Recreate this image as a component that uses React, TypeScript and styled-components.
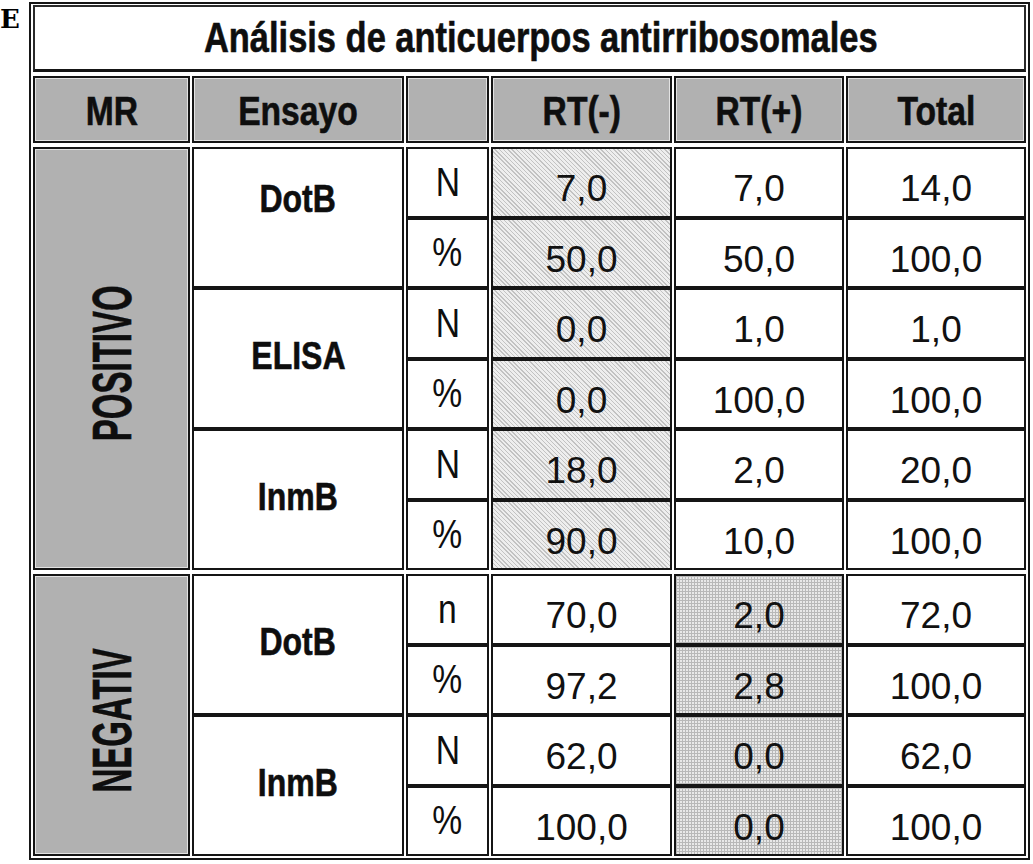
import React from "react";
import styled, { createGlobalStyle, css } from "styled-components";

const Global = createGlobalStyle`
  html, body { margin: 0; padding: 0; background: #ffffff; }
  body { font-family: "Liberation Sans", Arial, sans-serif; color: #111; }
`;

const Page = styled.div`
  display: flex;
  align-items: flex-start;
  padding-top: 2px;
  width: 1033px;
  height: 862px;
`;

const Letter = styled.div`
  width: 29px;
  padding-top: 4px;
  font-family: "DejaVu Serif", "Liberation Serif", serif;
  font-weight: 700;
  font-size: 26px;
  line-height: 1;
  color: #000;
`;

const Frame = styled.div`
  display: grid;
  grid-template-columns: 157px 212px 83px 181px 170px 180px;
  grid-template-rows: 67px 4px 67px 4px repeat(6, 70.5px) 4px repeat(4, 70.5px);
  column-gap: 2px;
  border: 2px solid #161616;
  padding: 1px 2px 2px 2px;
  background: #ffffff;
`;

type Place = { $row: number; $col: number; $rowSpan?: number; $colSpan?: number };

const placed = css<Place>`
  grid-row: ${(p) => p.$row} / span ${(p) => p.$rowSpan ?? 1};
  grid-column: ${(p) => p.$col} / span ${(p) => p.$colSpan ?? 1};
`;

const CellBase = styled.div<Place>`
  ${placed};
  box-sizing: border-box;
  border: 2px solid #151515;
  display: flex;
  align-items: center;
  justify-content: center;
  min-width: 0;
  min-height: 0;
  overflow: hidden;
  font-family: "Liberation Sans", Arial, sans-serif;
  color: #0e0e0e;
`;

/* condensed text: the reference uses a narrow grotesque */
const Narrow = styled.span`
  display: inline-block;
  white-space: nowrap;
  transform: scaleX(0.82);
  line-height: 1;
`;

const heavy = css`
  font-weight: 700;
  -webkit-text-stroke: 0.6px #0e0e0e;
`;

const TitleCell = styled(CellBase)`
  ${heavy};
  border-width: 2px 2px 3px 2px;
  border-color: #2a2a2a #2a2a2a #151515 #2a2a2a;
  padding-left: 22px;
  font-size: 42px;
`;

const HeadCell = styled(CellBase)`
  ${heavy};
  background: #b1b1b1;
  box-shadow: inset 0 0 0 1px #e2e2e2;
  font-size: 41px;
  padding-top: 3px;
`;

const GroupCell = styled(CellBase)`
  background: #b1b1b1;
  box-shadow: inset 0 0 0 1px #e2e2e2;
  padding-top: 10px;
`;

const Vertical = styled.span`
  ${heavy};
  writing-mode: vertical-rl;
  transform: rotate(180deg) scaleY(0.59);
  white-space: nowrap;
  font-size: 56px;
  line-height: 1;
`;

const LabelCell = styled(CellBase)<{ $lift: number }>`
  ${heavy};
  background: #ffffff;
  font-size: 39px;
  padding-bottom: ${(p) => 7 + p.$lift * 2}px;
`;

const UnitCell = styled(CellBase)`
  background: #ffffff;
  font-weight: 400;
  font-size: 41px;
`;

type Shade = "none" | "hatch" | "grid";

const ValueCell = styled(CellBase)<{ $shade: Shade }>`
  background-color: #ffffff;
  font-weight: 400;
  font-size: 37px;
  color: #111;
  padding-top: 14px;
  ${(p) =>
    p.$shade === "hatch" &&
    css`
      background-color: #e4e4e4;
      background-image: repeating-linear-gradient(
        45deg,
        #c2c2c2 0px,
        #c2c2c2 1px,
        #eeeeee 1px,
        #eeeeee 3px
      );
    `}
  ${(p) =>
    p.$shade === "grid" &&
    css`
      background-color: #e8e8e8;
      background-image: linear-gradient(#b8b8b8 1px, transparent 1px),
        linear-gradient(90deg, #b8b8b8 1px, transparent 1px);
      background-size: 3px 3px;
    `}
`;

type Group = { name: string; lift?: number; rows: string[][] };
type Section = { label: string; shadeCol: number; groups: Group[] };

const sections: Section[] = [
  {
    label: "POSITIVO",
    shadeCol: 0,
    groups: [
      { name: "DotB", lift: 16, rows: [["N", "7,0", "7,0", "14,0"], ["%", "50,0", "50,0", "100,0"]] },
      { name: "ELISA", rows: [["N", "0,0", "1,0", "1,0"], ["%", "0,0", "100,0", "100,0"]] },
      { name: "InmB", rows: [["N", "18,0", "2,0", "20,0"], ["%", "90,0", "10,0", "100,0"]] },
    ],
  },
  {
    label: "NEGATIV",
    shadeCol: 1,
    groups: [
      { name: "DotB", rows: [["n", "70,0", "2,0", "72,0"], ["%", "97,2", "2,8", "100,0"]] },
      { name: "InmB", rows: [["N", "62,0", "0,0", "62,0"], ["%", "100,0", "0,0", "100,0"]] },
    ],
  },
];

const headers = ["MR", "Ensayo", "", "RT(-)", "RT(+)", "Total"];

export default function App() {
  const cells: React.ReactNode[] = [];
  let row = 5;
  sections.forEach((sec, si) => {
    const span = sec.groups.length * 2;
    cells.push(
      <GroupCell key={`s${si}`} $row={row} $col={1} $rowSpan={span}>
        <Vertical>{sec.label}</Vertical>
      </GroupCell>
    );
    sec.groups.forEach((g, gi) => {
      const gRow = row + gi * 2;
      cells.push(
        <LabelCell key={`g${si}-${gi}`} $row={gRow} $col={2} $rowSpan={2} $lift={g.lift ?? 0}>
          <Narrow>{g.name}</Narrow>
        </LabelCell>
      );
      g.rows.forEach((r, ri) => {
        const rr = gRow + ri;
        cells.push(
          <UnitCell key={`u${si}-${gi}-${ri}`} $row={rr} $col={3}>
            <Narrow>{r[0]}</Narrow>
          </UnitCell>
        );
        r.slice(1).forEach((v, vi) => {
          const shade: Shade =
            vi === sec.shadeCol ? (sec.shadeCol === 0 ? "hatch" : "grid") : "none";
          cells.push(
            <ValueCell key={`v${si}-${gi}-${ri}-${vi}`} $row={rr} $col={4 + vi} $shade={shade}>
              {v}
            </ValueCell>
          );
        });
      });
    });
    row += span + 1;
  });

  return (
    <>
      <Global />
      <Page>
        <Letter>E</Letter>
        <Frame>
          <TitleCell $row={1} $col={1} $colSpan={6}>
            <Narrow>Análisis de anticuerpos antirribosomales</Narrow>
          </TitleCell>
          {headers.map((h, i) => (
            <HeadCell key={`h${i}`} $row={3} $col={i + 1}>
              <Narrow>{h}</Narrow>
            </HeadCell>
          ))}
          {cells}
        </Frame>
      </Page>
    </>
  );
}
